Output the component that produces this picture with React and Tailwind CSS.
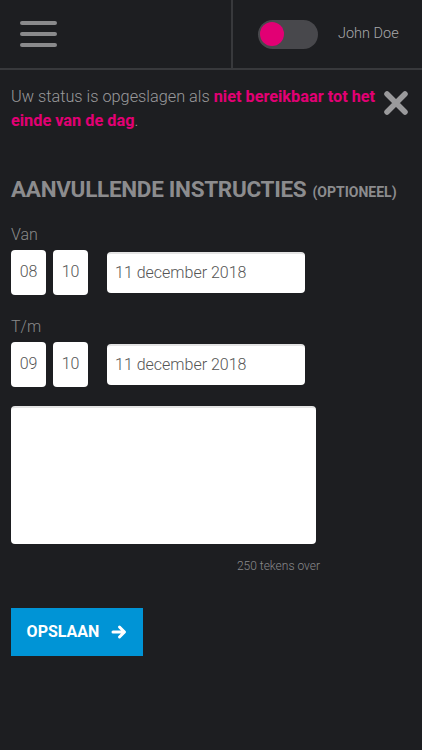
import React from 'react';

const font = { fontFamily: 'Roboto, "Liberation Sans", sans-serif' };

const TimeBox = ({ value }) => (
    <div className="flex h-[45px] w-[35px] items-center justify-center rounded-[4px] bg-white text-[16px] font-light text-[#555]">
        {value}
    </div>
);

const DateRow = ({ label, hour, minute, date }) => (
    <div>
        <div className="text-[16px] font-light leading-[20px] text-[#8a8a8a]">{label}</div>
        <div className="mt-[5px] flex items-center">
            <TimeBox value={hour} />
            <div className="ml-[7px]">
                <TimeBox value={minute} />
            </div>
            <div className="ml-[19px] flex h-[41px] w-[198px] items-center rounded-[4px] border-t-2 border-[#e4e4e4] bg-white pl-[8px] text-[16px] font-light text-[#555]">
                {date}
            </div>
        </div>
    </div>
);

export default function App() {
    return (
        <div className="h-[750px] w-[422px] overflow-hidden bg-[#1d1e21]" style={font}>
            {/* Header */}
            <div className="flex h-[70px] border-b-2 border-[#38393c]">
                <div className="flex w-[233px] flex-col justify-center gap-[7px] border-r-2 border-[#38393c] pl-[20px]">
                    <div className="h-[4px] w-[37px] rounded-full bg-[#8a8a8c]" />
                    <div className="h-[4px] w-[37px] rounded-full bg-[#8a8a8c]" />
                    <div className="h-[4px] w-[37px] rounded-full bg-[#8a8a8c]" />
                </div>
                <div className="flex flex-1 items-center pl-[25px]">
                    <div className="flex h-[29px] w-[60px] items-center rounded-full bg-[#48484c] pl-[2px]">
                        <div className="h-[24px] w-[24px] rounded-full bg-[#e20074]" />
                    </div>
                    <span className="ml-[20px] text-[14.5px] font-light text-[#a8a8aa]">John Doe</span>
                </div>
            </div>

            {/* Status */}
            <div className="flex items-start pl-[11px] pr-[13px] pt-[15px]">
                <p className="flex-1 text-[16.3px] font-light leading-[24px] text-[#9a9a9c]">
                    Uw status is opgeslagen als{' '}
                    <span className="font-bold text-[#e20074]">niet bereikbaar tot het einde van de dag</span>.
                </p>
                <svg width="26" height="26" viewBox="0 0 26 26" className="mt-[5px] ml-[4px] shrink-0">
                    <path d="M4 4 L22 22 M22 4 L4 22" stroke="#9a9a9c" strokeWidth="5.5" strokeLinecap="round" />
                </svg>
            </div>

            {/* Heading */}
            <div className="mt-[40px] flex items-baseline pl-[11px]">
                <h2 className="text-[22.5px] font-bold tracking-[-0.3px] text-[#8c8c8e]">AANVULLENDE INSTRUCTIES</h2>
                <span className="ml-[6px] text-[14px] font-bold text-[#8c8c8e]">(OPTIONEEL)</span>
            </div>

            <div className="mt-[18px] flex flex-col gap-[22px] pl-[11px]">
                <DateRow label="Van" hour="08" minute="10" date="11 december 2018" />
                <DateRow label="T/m" hour="09" minute="10" date="11 december 2018" />
            </div>

            {/* Textarea */}
            <div className="mt-[19px] w-[320px] pl-[11px]">
                <div className="h-[138px] w-[305px] rounded-[4px] border-t-2 border-[#e4e4e4] bg-white" />
                <div className="mt-[13px] text-right text-[12px] font-light text-[#8a8a8c]">250 tekens over</div>
            </div>

            {/* Button */}
            <div className="mt-[33px] pl-[11px]">
                <button className="flex h-[48px] w-[132px] items-center justify-center gap-[12px] bg-[#0094d6] text-[16px] font-bold text-white">
                    OPSLAAN
                    <svg width="16" height="16" viewBox="0 0 16 16">
                        <path d="M2 8 H13 M8.5 3 L13.5 8 L8.5 13" stroke="white" strokeWidth="3" fill="none" strokeLinecap="round" strokeLinejoin="round" />
                    </svg>
                </button>
            </div>
        </div>
    );
}
